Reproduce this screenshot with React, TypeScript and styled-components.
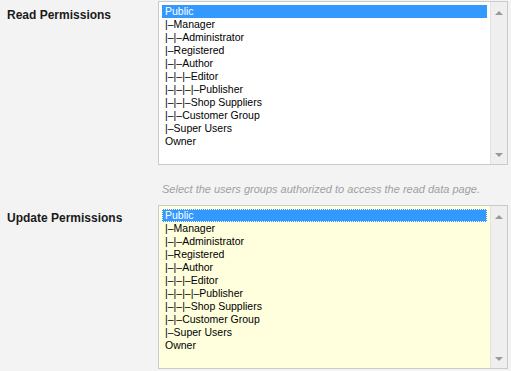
import React from 'react'
import styled, { createGlobalStyle } from 'styled-components'

const GlobalStyle = createGlobalStyle`
    html, body {
        margin: 0;
        padding: 0;
        background: #f3f3f3;
    }
`

const Page = styled.div`
    font-family: 'Liberation Sans', Arial, sans-serif;
    padding: 1px 3px 0 7px;
    width: 511px;
    box-sizing: border-box;
`

const FieldRow = styled.div`
    display: grid;
    grid-template-columns: 151px 350px;
    align-items: start;
`

const Label = styled.div`
    font-weight: bold;
    font-size: 12px;
    line-height: 14px;
    color: #1a1a1a;
    padding-top: ${p => p.$offset}px;
`

const ListBox = styled.div`
    height: 164px;
    box-sizing: border-box;
    border: 1px solid #cacaca;
    background: ${p => p.$bg};
    display: flex;
`

const Options = styled.div`
    flex: 1;
    padding: 3px 3px 0 3px;
    overflow: hidden;
`

const Option = styled.div`
    height: 13px;
    line-height: 13px;
    font-size: 10.5px;
    padding-left: 3px;
    white-space: nowrap;
    color: ${p => (p.$selected ? '#fff' : '#000')};
    background: ${p => (p.$selected ? '#3399ff' : 'transparent')};
    outline: ${p => (p.$focused ? '1px dotted #fff' : 'none')};
    outline-offset: -1px;
`

const Scrollbar = styled.div`
    width: 16px;
    background: #efefef;
    border-left: 1px solid #e2e2e2;
    display: flex;
    flex-direction: column;
    justify-content: space-between;
    align-items: center;
    padding: 9px 0 7px;
`

const Arrow = styled.div`
    width: 0;
    height: 0;
    border-left: 4px solid transparent;
    border-right: 4px solid transparent;
    ${p => (p.$up ? 'border-bottom: 4px solid #9a9a9a;' : 'border-top: 4px solid #9a9a9a;')}
`

const Help = styled.div`
    margin: 17px 0 9px 155px;
    font-size: 11px;
    line-height: 14px;
    font-style: italic;
    color: #a0a0a0;
`

const groups = [
    'Public',
    '|–Manager',
    '|–|–Administrator',
    '|–Registered',
    '|–|–Author',
    '|–|–|–Editor',
    '|–|–|–|–Publisher',
    '|–|–|–Shop Suppliers',
    '|–|–Customer Group',
    '|–Super Users',
    'Owner',
]

function GroupList({ bg, focused }: { bg: string; focused?: boolean }) {
    return (
        <ListBox $bg={bg}>
            <Options>
                {groups.map((g, i) => (
                    <Option key={g} $selected={i === 0} $focused={focused && i === 0}>
                        {g}
                    </Option>
                ))}
            </Options>
            <Scrollbar>
                <Arrow $up />
                <Arrow />
            </Scrollbar>
        </ListBox>
    )
}

export default function App(): React.ReactElement {
    return (
        <Page>
            <GlobalStyle />
            <FieldRow>
                <Label $offset={7}>Read Permissions</Label>
                <GroupList bg="#ffffff" />
            </FieldRow>
            <Help>Select the users groups authorized to access the read data page.</Help>
            <FieldRow>
                <Label $offset={6}>Update Permissions</Label>
                <GroupList bg="#ffffdd" focused />
            </FieldRow>
        </Page>
    )
}
